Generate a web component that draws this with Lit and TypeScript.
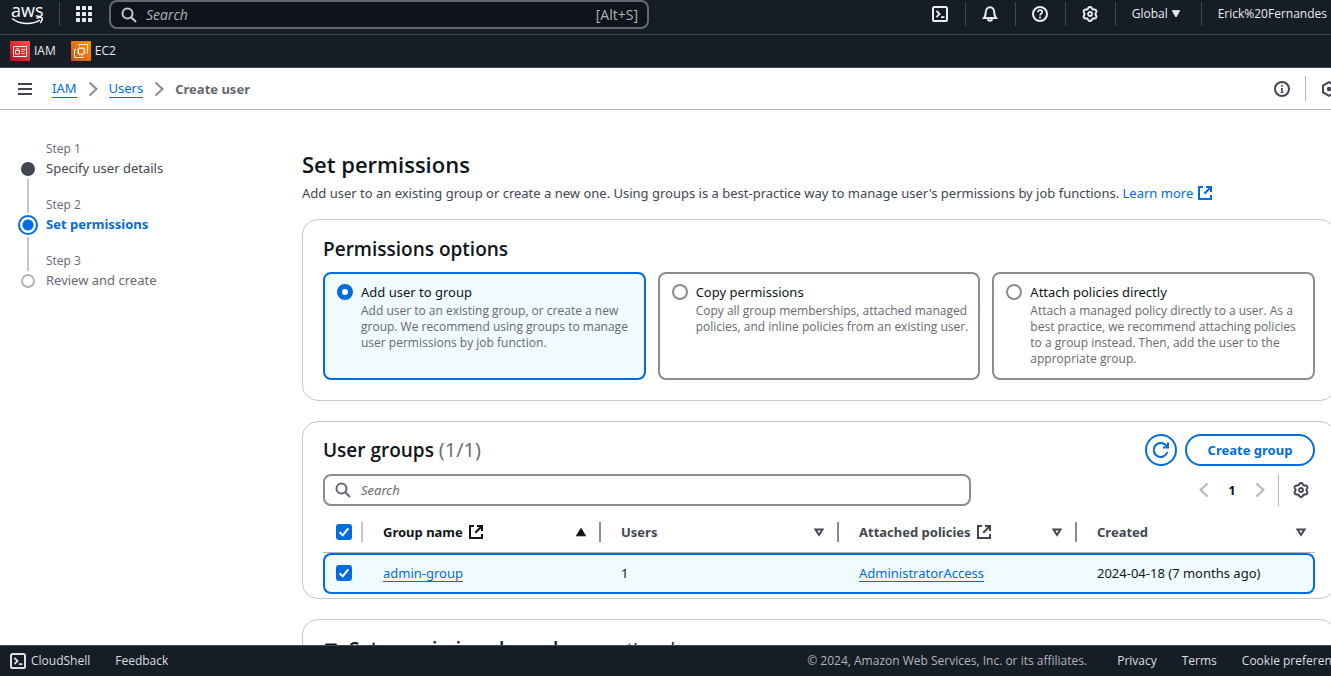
import { LitElement, html, css, svg, nothing } from "lit";
import { customElement, property, state } from "lit/decorators.js";
import { classMap } from "lit/directives/class-map.js";

const gearOutline = (() => {
  const steps = 72;
  const points: string[] = [];
  for (let i = 0; i < steps; i++) {
    const a = (i / steps) * Math.PI * 2;
    const r = 6.3 + 0.85 * Math.cos(6 * a);
    points.push(`${(8 + r * Math.sin(a)).toFixed(2)} ${(8 - r * Math.cos(a)).toFixed(2)}`);
  }
  return `M${points.join("L")}Z`;
})();

const shapes: Record<string, unknown> = {
  search: svg`<circle cx="6.5" cy="6.5" r="5"/><path d="M10.2 10.2 15 15"/>`,
  terminal: svg`<rect x="1" y="1" width="14" height="14" rx="1.6"/><path d="M4.4 4.800 7.600 8l-3.200 3.200M9 11.200h3.500" stroke-width="1.800"/>`,
  bell: svg`<path d="M2 12c1.2-1.4 1.7-2.8 1.7-5.2C3.700 3.600 5.400 1.200 8 1.200s4.300 2.400 4.300 5.600c0 2.400.5 3.800 1.700 5.200Z"/><path d="M6 12.500c0 1.300.8 2.200 2 2.200s2-.9 2-2.200"/>`,
  help: svg`<circle cx="8" cy="8" r="7"/><path d="M5.800 6.300C5.800 5 6.700 4.200 8 4.200s2.200.8 2.200 2c0 1.500-2.200 1.600-2.200 3.300M8 10.600v1.800" stroke-width="1.700"/>`,
  gear: svg`<path d=${gearOutline}/><circle cx="8" cy="8" r="2" stroke-width="1.800"/>`,
  info: svg`<circle cx="8" cy="8" r="7"/><path d="M8 4v1.800M7 7.700h1V12" stroke-width="1.600"/><path d="M6.500 11.600h3" stroke-width=".9"/>`,
  hexagon: svg`<path d="M8 1.200 14 4.500v7L8 14.800 2 11.500v-7Z"/><circle cx="8" cy="8" r="1.200" fill="currentColor"/>`,
  menu: svg`<path d="M1 3h14M1 8h14M1 13h14"/>`,
  chevronRight: svg`<path d="m4.500 1.500 7 6.500-7 6.500"/>`,
  chevronLeft: svg`<path d="m11.500 1.500-7 6.500 7 6.500"/>`,
  external: svg`<path d="M6 2H2v12h12v-4"/><path d="M9 2h5v5M7.300 8.700 14 2"/>`,
  refresh: svg`<path d="M14.400 10A7 7 0 1 1 13.800 4.500"/><path d="M10 5.600h5V.6"/>`,
  sortUp: svg`<path d="M8 4.400 12.500 11.800h-9Z" fill="currentColor" stroke-width="1"/>`,
  sortDown: svg`<path d="M4.500 5.500h7L8 11Z"/>`,
  caretDown: svg`<path d="M4.300 4.700h7.400L8 11Z" fill="currentColor" stroke-width="1"/>`,
  expanded: svg`<path d="M2.500 3h11L8 12Z" fill="currentColor" stroke-width="1"/>`,
};

@customElement("ui-icon")
export class UiIcon extends LitElement {
  static styles = css`
    :host { display: inline-flex; flex: none; width: 16px; height: 16px; }
    svg { width: 100%; height: 100%; display: block; fill: none; stroke: currentColor; stroke-width: 2; }
  `;
  @property() name = "";
  render() {
    return html`<svg viewBox="0 0 16 16" aria-hidden="true">${shapes[this.name] ?? nothing}</svg>`;
  }
}

const options = [
  {
    title: "Add user to group",
    text: "Add user to an existing group, or create a new group. We recommend using groups to manage user permissions by job function.",
  },
  {
    title: "Copy permissions",
    text: "Copy all group memberships, attached managed policies, and inline policies from an existing user.",
  },
  {
    title: "Attach policies directly",
    text: "Attach a managed policy directly to a user. As a best practice, we recommend attaching policies to a group instead. Then, add the user to the appropriate group.",
  },
];

const steps = [
  { label: "Step 1", title: "Specify user details", kind: "done" },
  { label: "Step 2", title: "Set permissions", kind: "current" },
  { label: "Step 3", title: "Review and create", kind: "next" },
];

const columns = [
  { title: "Group name", link: true, sorted: true },
  { title: "Users", link: false, sorted: false },
  { title: "Attached policies", link: true, sorted: false },
  { title: "Created", link: false, sorted: false },
];

@customElement("app-root")
export class AppRoot extends LitElement {
  static styles = css`
    :host {
      display: flex; flex-direction: column; height: 100vh; overflow: hidden;
      font: 450 13px/20px "Noto Sans", "Open Sans", sans-serif; color: #0f141a; background: #fff;
    }
    * { box-sizing: border-box; }
    button, input { font: inherit; color: inherit; }
    button { background: none; border: 0; padding: 0; }
    h1, h2, p { margin: 0; }
    a { color: #006ce0; text-decoration: none; }
    .underlined { border-bottom: 1px solid #006ce0; line-height: 16px; display: inline-block; }

    .topbar, .favourites, .step-label, .tile-text, .footer { font-family: "Open Sans", sans-serif; font-size: 12px; font-weight: 400; }

    .topbar {
      display: flex; align-items: flex-start; flex: none; height: 35px; overflow: hidden;
      background: #161d26; border-bottom: 1px solid #424650; color: #ebebf0; white-space: nowrap;
    }
    .topbar > * { height: 28px; }
    .logo { width: 59px; padding-left: 11px; color: #fff; display: flex; flex-direction: column; }
    .logo-word { font-size: 18px; line-height: 20px; font-weight: 500; margin-bottom: -3px; }
    .logo svg { width: 33px; height: 8px; fill: none; stroke: #fff; stroke-width: 1.5; }
    .apps { display: grid; place-items: center; width: 50px; position: relative; }
    .apps svg { width: 16px; height: 16px; fill: #ebebf0; }
    .apps::before, .tool + .tool::before {
      content: ""; position: absolute; left: 0; top: 2px; height: 24px; width: 1px; background: #424650;
    }
    .global-search {
      width: 540px; display: flex; align-items: center; gap: 9px; padding: 0 9px 0 10px; height: 29px;
      border: 2px solid #656871; border-radius: 8px; background: #0f141a; color: #b4b4bb; font-size: 14px;
    }
    .global-search ui-icon { color: #c6c6cd; }
    .search-input { flex: 1; min-width: 0; border: 0; outline: 0; padding: 0; background: none; }
    .search-input::placeholder { font-style: italic; color: inherit; opacity: 1; }
    .tools { display: flex; margin-left: auto; }
    .tool { display: flex; align-items: center; padding: 0 17px; position: relative; }
    .tool:last-child { padding-right: 4px; }

    .favourites {
      display: flex; flex: none; align-items: center; gap: 15px; height: 33px; padding-left: 10px;
      background: #161d26; border-bottom: 1px solid #424650;
    }
    .favourite { display: flex; align-items: center; gap: 4px; color: #ebebf0; }
    .favourite svg { width: 20px; height: 20px; fill: none; stroke: #fff; }

    .crumbbar {
      display: flex; flex: none; align-items: center; height: 42px; padding-left: 17px;
      border-bottom: 1px solid #b4b4bb; color: #424650; overflow: hidden;
    }
    .crumbbar button { display: flex; }
    .crumbs { display: flex; align-items: center; gap: 8px; margin-left: 19px; }
    .crumbs ui-icon { color: #8c8c94; }
    .crumbs .underlined { line-height: 17px; }
    .crumb-current { color: #656871; }
    .crumb-current, .current .step-title, .button, .page-number { font-weight: 700; }
    .panel-buttons { display: flex; align-items: center; margin: 0 -6px 0 auto; }
    .panel-divider { width: 1px; height: 25px; margin: 0 15px; background: #b4b4bb; }

    .body { flex: 1; min-height: 0; overflow: hidden; display: grid; grid-template-columns: 302px minmax(0, 1fr); }
    .steps { list-style: none; margin: 0; padding: 30px 0 0 18px; }
    .step { display: grid; grid-template-columns: 20px 1fr; column-gap: 8px; height: 56px; align-content: start; color: #656871; }
    .step-label { grid-column: 2; line-height: 18px; }
    .step-mark { display: grid; justify-items: center; align-content: start; height: 56px; }
    .dot { width: 14px; height: 14px; border-radius: 50%; margin: 4px 0 3px; border: 2px solid #b4b4bb; }
    .done .dot { background: #424650; border-color: #424650; }
    .current .dot {
      width: 20px; height: 20px; margin: 1px 0 2px; border-color: #006ce0;
      background: radial-gradient(circle, #006ce0 5px, #fff 6px);
    }
    .line { width: 2px; height: 34px; background: #c6c6cd; }
    .done .step-title { color: #424650; }
    .current .step-title { color: #006ce0; }

    .content { margin-right: -5px; padding-top: 40px; }
    h1, h2 { font-family: "Open Sans", sans-serif; font-weight: 650; }
    h1 { font-size: 22px; line-height: 28px; }
    .intro { color: #424650; line-height: 20px; padding-top: 5px; }
    .intro a { display: inline-flex; align-items: center; gap: 4px; }
    .card { border: 1px solid #c6c6cd; border-radius: 16px; padding: 14px 20px 20px; margin-bottom: 20px; }
    .intro + .card { margin-top: 16px; }
    h2 { font-size: 19px; line-height: 30px; }
    .count { font-weight: 400; font-size: 20px; color: #656871; }
    .tiles { display: grid; grid-template-columns: repeat(3, minmax(0, 1fr)); gap: 12px; margin-top: 8px; }
    .tile {
      display: grid; grid-template-columns: 16px 1fr; column-gap: 8px; align-content: start; min-height: 108px;
      border: 2px solid #8c8c94; border-radius: 8px; padding: 8px 6px 8px 12px;
    }
    .tile.selected { border-color: #006ce0; background: #f0fbff; }
    .tile-text { grid-column: 2; color: #656871; line-height: 16px; padding-top: 1px; }
    .radio { appearance: none; width: 16px; height: 16px; margin: 2px 0 0; border: 2px solid #8c8c94; border-radius: 50%; background: #fff; }
    .radio:checked { border: 5px solid #006ce0; }

    .groups { padding: 12px 20px 4px; }
    .group-head { display: flex; align-items: center; justify-content: space-between; height: 32px; }
    .actions { display: flex; gap: 8px; }
    .button { min-width: 130px; height: 32px; border: 2px solid #006ce0; border-radius: 16px; color: #006ce0; padding: 0 20px; }
    .button.round { min-width: 32px; padding: 0; display: grid; place-items: center; }
    .filter-row { display: flex; align-items: center; justify-content: space-between; margin-top: 8px; }
    .filter {
      display: flex; align-items: center; gap: 10px; flex: 0 1 648px; height: 32px; padding: 0 10px;
      border: 2px solid #8c8c94; border-radius: 8px; color: #656871;
    }
    .pager { display: flex; align-items: center; gap: 10px; height: 32px; color: #424650; }
    .pager button { display: flex; }
    .page-arrow { color: #b4b4bb; }
    .pager .page-number { width: 20px; justify-content: center; color: #0f141a; }
    .pager-settings { padding: 8px 6px 8px 14px; border-left: 1px solid #b4b4bb; }

    table { width: 100%; table-layout: fixed; border-collapse: separate; border-spacing: 0; margin-top: 6px; }
    .pick { width: 40px; }
    th { height: 41px; padding: 0; text-align: left; border-bottom: 1px solid #b4b4bb; color: #424650; }
    th.sorted { color: #0f141a; }
    .head { display: flex; align-items: center; gap: 5px; height: 20px; padding: 0 10px 0 20px; border-right: 2px solid #8c8c94; }
    .head.first { padding: 0 0 0 13px; border-color: #c6c6cd; }
    th:last-child .head { border-right: 0; padding-right: 6px; }
    .sort { display: flex; margin-left: auto; }
    td { height: 41px; padding: 0 0 2px 20px; background: #f0fbff; border: solid #006ce0; border-width: 2px 0; }
    td:first-child { padding-left: 11px; border-left-width: 2px; border-radius: 8px 0 0 8px; }
    td:last-child { border-right-width: 2px; border-radius: 0 8px 8px 0; }
    .check {
      appearance: none; display: block; width: 16px; height: 16px; margin: 0; border-radius: 3px; border: 2px solid #8c8c94;
    }
    .check:checked {
      border: 0;
      background: #006ce0 url("data:image/svg+xml,%3Csvg xmlns='http://www.w3.org/2000/svg' viewBox='0 0 16 16'%3E%3Cpath d='M3.500 8.300 6.700 11.300 12.300 4.300' fill='none' stroke='white' stroke-width='2'/%3E%3C/svg%3E");
    }
    .boundary h2 { display: flex; align-items: center; gap: 10px; }
    .boundary em { font-weight: 400; }

    .footer {
      display: flex; flex: none; align-items: center; height: 31px; padding-left: 10px; overflow: hidden; white-space: nowrap;
      background: #161d26; border-top: 1px solid #424650; color: #dedee3;
    }
    .footer a, .footer button { color: inherit; }
    .shell { display: flex; align-items: center; gap: 5px; margin-right: 25px; }
    .legal { display: flex; gap: 25px; margin: 0 -19px 0 auto; }
    .copyright { color: #b4b4bb; padding-right: 5px; }
  `;

  @state() private choice = 0;
  @state() private picked = true;

  private toggle = (e: Event) => {
    this.picked = (e.target as HTMLInputElement).checked;
  };

  private renderTop() {
    const dots = [0, 6, 12];
    return html`
      <header class="topbar">
        <a class="logo" href="#" aria-label="AWS home">
          <span class="logo-word">aws</span>
          <svg viewBox="0 0 33 8"><path d="M1 1.500c8 6.300 20 6.300 28 1.600"/><path d="M25.500 1.200c2-.7 5-.8 5.500-.2s-.2 3-1.800 5"/></svg>
        </a>
        <button class="apps" aria-label="Services">
          <svg viewBox="0 0 16 16">${dots.map((y) => dots.map((x) => svg`<rect x=${x} y=${y} width="4" height="4" rx=".6"/>`))}</svg>
        </button>
        <label class="global-search">
          <ui-icon name="search"></ui-icon>
          <input class="search-input" type="search" placeholder="Search" aria-label="Search services" />
          <span>[Alt+S]</span>
        </label>
        <nav class="tools">
          ${["terminal", "bell", "help", "gear"].map(
            (name) => html`<button class="tool" aria-label=${name}><ui-icon name=${name}></ui-icon></button>`
          )}
          <button class="tool">Global <ui-icon name="caretDown"></ui-icon></button>
          <button class="tool">Erick%20Fernandes</button>
        </nav>
      </header>
      <nav class="favourites">
        <a class="favourite" href="#">
          <svg viewBox="0 0 20 20">
            <defs><linearGradient id="r" x1="0" y1="1" x2="1" y2="0"><stop stop-color="#bd0816"/><stop offset="1" stop-color="#ff5252"/></linearGradient></defs>
            <rect width="20" height="20" rx="1" fill="url(#r)" stroke="none"/>
            <path d="M3.500 5.500h13v10h-13zM5.500 9.500h4v3.500h-4zM6.300 9.500V8.500c0-1.500 2.400-1.500 2.400 0v1M11.500 8.500h3.500M11.500 10.500h2M11.500 12.500h3" stroke-width=".9"/>
          </svg>IAM</a>
        <a class="favourite" href="#">
          <svg viewBox="0 0 20 20">
            <defs><linearGradient id="o" x1="0" y1="1" x2="1" y2="0"><stop stop-color="#c8511b"/><stop offset="1" stop-color="#ff9900"/></linearGradient></defs>
            <rect width="20" height="20" rx="1" fill="url(#o)" stroke="none"/>
            <path d="M7.500 7.500h5.500v5.500H7.500zM8.500 6v1.500M10.300 6v1.500M12 6v1.500M13 8.500h1.500M13 10.300h1.500M13 12h1.500M6 8.500h1.500M6 10.300h1.500M6 12h1.500M8.500 13v1.500M10.300 13v1.500M12 13v1.500" stroke-width=".8"/>
            <path d="M8 5V3.500h8.500V12H15.500M5 8.500H3.500v8H12V15.500" stroke-width=".9"/>
          </svg>EC2</a>
      </nav>
      <div class="crumbbar">
        <button aria-label="Open navigation"><ui-icon name="menu"></ui-icon></button>
        <nav class="crumbs" aria-label="Breadcrumbs">
          <a class="underlined" href="#">IAM</a><ui-icon name="chevronRight"></ui-icon>
          <a class="underlined" href="#">Users</a><ui-icon name="chevronRight"></ui-icon>
          <span class="crumb-current">Create user</span>
        </nav>
        <div class="panel-buttons">
          <button aria-label="Info"><ui-icon name="info"></ui-icon></button>
          <span class="panel-divider"></span>
          <button aria-label="Console assistant"><ui-icon name="hexagon"></ui-icon></button>
        </div>
      </div>
    `;
  }

  private renderTable() {
    return html`
      <table>
        <thead>
          <tr>
            <th class="pick"><div class="head first"><input class="check" type="checkbox" aria-label="Select all groups" .checked=${this.picked} @change=${this.toggle} /></div></th>
            ${columns.map(
              (c) => html`<th class=${classMap({ sorted: c.sorted })}>
                <div class="head">
                  <span>${c.title}</span>
                  ${c.link ? html`<ui-icon name="external"></ui-icon>` : nothing}
                  <button class="sort" aria-label="Sort by ${c.title}"><ui-icon name=${c.sorted ? "sortUp" : "sortDown"}></ui-icon></button>
                </div>
              </th>`
            )}
          </tr>
        </thead>
        <tbody>
          <tr>
            <td><input class="check" type="checkbox" aria-label="Select admin-group" .checked=${this.picked} @change=${this.toggle} /></td>
            <td><a class="underlined" href="#">admin-group</a></td>
            <td>1</td>
            <td><a class="underlined" href="#">AdministratorAccess</a></td>
            <td>2024-04-18 (7 months ago)</td>
          </tr>
        </tbody>
      </table>
    `;
  }

  render() {
    return html`
      ${this.renderTop()}
      <div class="body">
        <ol class="steps">
          ${steps.map(
            (s, i) => html`<li class="step ${s.kind}">
              <span class="step-label">${s.label}</span>
              <span class="step-mark"><span class="dot"></span>${i < steps.length - 1 ? html`<span class="line"></span>` : nothing}</span>
              <span class="step-title">${s.title}</span>
            </li>`
          )}
        </ol>
        <main class="content">
          <h1>Set permissions</h1>
          <p class="intro">
            Add user to an existing group or create a new one. Using groups is a best-practice way to manage user's permissions by job functions.
            <a href="#">Learn more <ui-icon name="external"></ui-icon></a>
          </p>
          <section class="card">
            <h2>Permissions options</h2>
            <div class="tiles" role="radiogroup" aria-label="Permissions options">
              ${options.map(
                (o, i) => html`<label class="tile ${classMap({ selected: this.choice === i })}">
                  <input class="radio" type="radio" name="option" .checked=${this.choice === i} @change=${() => (this.choice = i)} />
                  <span>${o.title}</span>
                  <span class="tile-text">${o.text}</span>
                </label>`
              )}
            </div>
          </section>
          <section class="card groups">
            <div class="group-head">
              <h2>User groups <span class="count">(1/1)</span></h2>
              <div class="actions">
                <button class="button round" aria-label="Refresh"><ui-icon name="refresh"></ui-icon></button>
                <button class="button">Create group</button>
              </div>
            </div>
            <div class="filter-row">
              <label class="filter">
                <ui-icon name="search"></ui-icon>
                <input class="search-input" type="search" placeholder="Search" aria-label="Search groups" />
              </label>
              <div class="pager">
                <button class="page-arrow" aria-label="Previous page"><ui-icon name="chevronLeft"></ui-icon></button>
                <button class="page-number">1</button>
                <button class="page-arrow" aria-label="Next page"><ui-icon name="chevronRight"></ui-icon></button>
                <button class="pager-settings" aria-label="Preferences"><ui-icon name="gear"></ui-icon></button>
              </div>
            </div>
            ${this.renderTable()}
          </section>
          <section class="card boundary">
            <h2><ui-icon name="expanded"></ui-icon><span>Set permissions boundary - <em>optional</em></span></h2>
          </section>
        </main>
      </div>
      <footer class="footer">
        <button class="shell"><ui-icon name="terminal"></ui-icon>CloudShell</button>
        <a href="#">Feedback</a>
        <div class="legal">
          <span class="copyright">© 2024, Amazon Web Services, Inc. or its affiliates.</span>
          <a href="#">Privacy</a>
          <a href="#">Terms</a>
          <a href="#">Cookie preferences</a>
        </div>
      </footer>
    `;
  }
}
